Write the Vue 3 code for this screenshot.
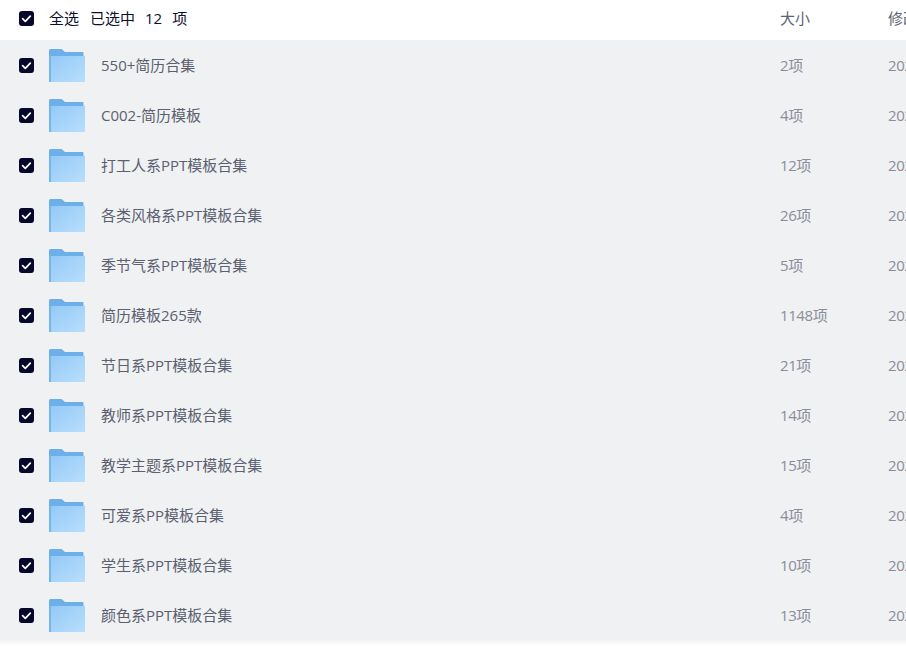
<template>
  <div class="page">
    <div class="list-header">
      <span class="check">
        <svg viewBox="0 0 15 15" width="15" height="15"><path d="M3.6 7.7l2.7 2.6 5-5.2" fill="none" stroke="#fff" stroke-width="1.7" stroke-linecap="round" stroke-linejoin="round" /></svg>
      </span>
      <div class="select-info">
        <span>全选</span>
        <span class="selected-count">已选中<b>12</b>项</span>
      </div>
      <span class="col-size">大小</span>
      <span class="col-date">修改时间</span>
    </div>
    <div class="list-body">
      <div class="list-row" v-for="item in files" :key="item.name">
        <span class="check">
          <svg viewBox="0 0 15 15" width="15" height="15"><path d="M3.6 7.7l2.7 2.6 5-5.2" fill="none" stroke="#fff" stroke-width="1.7" stroke-linecap="round" stroke-linejoin="round" /></svg>
        </span>
        <svg class="folder" viewBox="0 0 36 33" width="36" height="33">
          <defs>
            <linearGradient id="folderFront" x1="0" y1="0" x2="1" y2="1">
              <stop offset="0" stop-color="#93c9f6" />
              <stop offset="1" stop-color="#b8defd" />
            </linearGradient>
          </defs>
          <path d="M0 1.5Q0 0 1.5 0H12.5L16 3H33.5Q34.5 3 34.5 4V10H0Z" fill="#6cafe9" />
          <path d="M2.5 7H36V33H0V7Z" fill="url(#folderFront)" />
          <path d="M0 7H2V33H0Z" fill="#74b5ee" />
          <path d="M24 10.500H33V11.500H24ZM28 12.500H33V13.500H28Z" fill="#a9d5f9" />
        </svg>
        <span class="file-name">{{ item.name }}</span>
        <span class="col-size file-size">{{ item.size }}</span>
        <span class="col-date file-date">{{ item.date }}</span>
      </div>
    </div>
    <div class="list-fade"></div>
  </div>
</template>

<script setup>
import { ref } from 'vue'

const files = ref([
  { name: '550+简历合集', size: '2项', date: '2023-03-12 10:20' },
  { name: 'C002-简历模板', size: '4项', date: '2023-03-12 10:20' },
  { name: '打工人系PPT模板合集', size: '12项', date: '2023-03-12 10:20' },
  { name: '各类风格系PPT模板合集', size: '26项', date: '2023-03-12 10:20' },
  { name: '季节气系PPT模板合集', size: '5项', date: '2023-03-12 10:20' },
  { name: '简历模板265款', size: '1148项', date: '2023-03-12 10:20' },
  { name: '节日系PPT模板合集', size: '21项', date: '2023-03-12 10:20' },
  { name: '教师系PPT模板合集', size: '14项', date: '2023-03-12 10:20' },
  { name: '教学主题系PPT模板合集', size: '15项', date: '2023-03-12 10:20' },
  { name: '可爱系PP模板合集', size: '4项', date: '2023-03-12 10:20' },
  { name: '学生系PPT模板合集', size: '10项', date: '2023-03-12 10:20' },
  { name: '颜色系PPT模板合集', size: '13项', date: '2023-03-12 10:20' }
])
</script>

<style>
html,
body {
  margin: 0;
  overflow: hidden;
  background: #fff;
}
</style>

<style scoped>
.page {
  width: 906px;
  height: 664px;
  overflow: hidden;
  background: #fff;
  font-family: "Open Sans", "Noto Sans CJK SC", sans-serif;
  font-size: 15px;
  line-height: 20px;
}

.list-header {
  height: 36px;
  padding-bottom: 4px;
  display: flex;
  align-items: center;
  color: #0d0f2b;
  white-space: nowrap;
}

.list-header span {
  margin-bottom: 1px;
}

.list-header .check {
  margin-bottom: 0;
}

.check {
  flex: none;
  width: 15px;
  height: 15px;
  margin-left: 19px;
  margin-right: 15px;
  border-radius: 3px;
  background: #05082b;
  display: flex;
}

.select-info {
  flex: none;
  width: 731px;
  display: flex;
  gap: 11px;
}

.selected-count b {
  font-weight: 400;
  margin: 0 10px;
}

.col-size {
  flex: none;
  width: 108px;
}

.col-date {
  flex: none;
  width: 130px;
}

.list-header .col-size,
.list-header .col-date {
  color: #5f6272;
}

.list-body {
  background: #eff1f3;
}

.list-row {
  height: 50px;
  display: flex;
  align-items: center;
  white-space: nowrap;
}

.folder {
  flex: none;
  margin-top: 1px;
  margin-right: 16px;
}

.file-name {
  flex: none;
  width: 679px;
  color: #5c5f70;
}

.file-size,
.file-date {
  color: #8b8d9a;
  letter-spacing: -0.4px;
}

.list-fade {
  height: 6px;
  background: linear-gradient(#f3f4f6, #fff);
}
</style>
